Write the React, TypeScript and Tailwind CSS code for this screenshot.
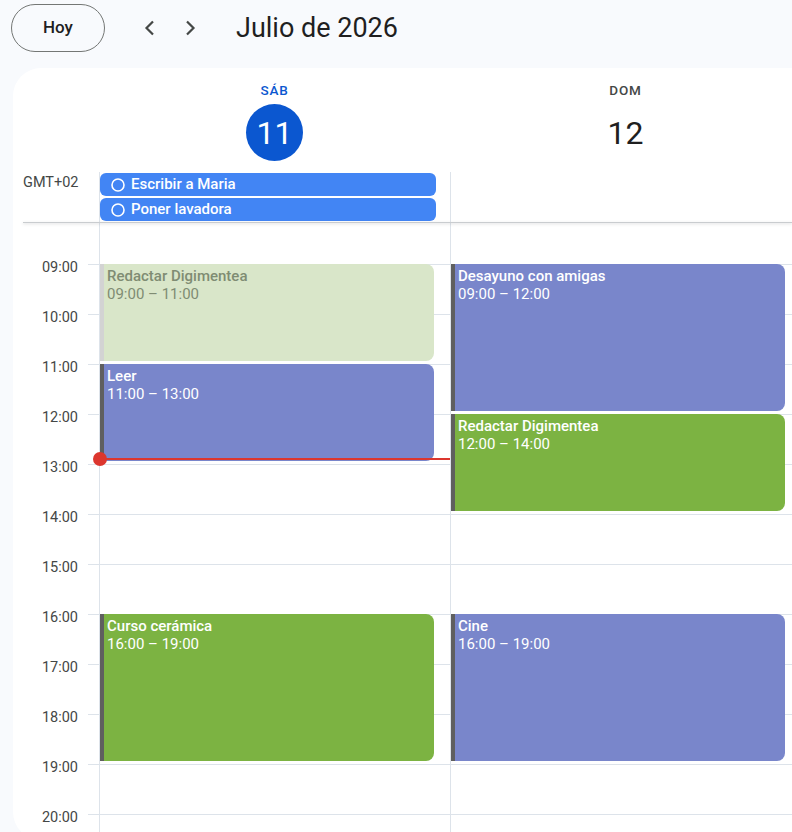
import React from "react";

type Ev = { title: string; time: string; start: number; end: number; color: string; faded?: boolean };

const col1: Ev[] = [
  { title: "Redactar Digimentea", time: "09:00 – 11:00", start: 9, end: 11, color: "bg-[#d9e6c9]", faded: true },
  { title: "Leer", time: "11:00 – 13:00", start: 11, end: 13, color: "bg-[#7986cb]" },
  { title: "Curso cerámica", time: "16:00 – 19:00", start: 16, end: 19, color: "bg-[#7cb342]" },
];
const col2: Ev[] = [
  { title: "Desayuno con amigas", time: "09:00 – 12:00", start: 9, end: 12, color: "bg-[#7986cb]" },
  { title: "Redactar Digimentea", time: "12:00 – 14:00", start: 12, end: 14, color: "bg-[#7cb342]" },
  { title: "Cine", time: "16:00 – 19:00", start: 16, end: 19, color: "bg-[#7986cb]" },
];

const hours = [9, 10, 11, 12, 13, 14, 15, 16, 17, 18, 19, 20];
const HOUR = 50;
const TOP = 41;

function EventBox({ ev }: { ev: Ev }) {
  return (
    <div
      className={`absolute left-0 w-[334px] rounded-r-[8px] border-l-[4px] pl-[3px] pt-[3px] leading-[18px] text-[15px] ${ev.color} ${
        ev.faded ? "border-[#d3d3d3] text-[#7f8c73]" : "border-[#5f5f5f] text-white"
      }`}
      style={{ top: TOP + (ev.start - 9) * HOUR, height: (ev.end - ev.start) * HOUR - 3 }}
    >
      <div className="font-medium">{ev.title}</div>
      <div>{ev.time}</div>
    </div>
  );
}

function Column({ events, now, w }: { events: Ev[]; now?: boolean; w: string }) {
  return (
    <div className={`relative ${w} shrink-0 border-l border-[#dde3ea]`}>
      <div className="h-[41px]" />
      {hours.map((h) => (
        <div key={h} className="h-[50px] border-t border-[#dde3ea]" />
      ))}
      {events.map((e, i) => (
        <EventBox key={i} ev={e} />
      ))}
      {now && (
        <div className="absolute left-[-1px] right-0 top-[235px] z-10 h-[2px] bg-[#dc362e]">
          <div className="absolute left-[-6px] top-[-6px] h-[14px] w-[14px] rounded-full bg-[#dc362e]" />
        </div>
      )}
    </div>
  );
}

function Chip({ text }: { text: string }) {
  return (
    <div className="flex h-[23px] w-[336px] items-center gap-[6px] rounded-[6px] bg-[#4285f4] pl-[11px] text-[15px] font-medium text-white">
      <svg width="14" height="14" viewBox="0 0 14 14">
        <circle cx="7" cy="7" r="6" fill="none" stroke="white" strokeWidth="1.6" />
      </svg>
      <span>{text}</span>
    </div>
  );
}

export default function App() {
  return (
    <div
      className="flex h-[832px] w-[792px] flex-col overflow-hidden bg-[#f8fafd] text-[#1f1f1f]"
      style={{ fontFamily: "Roboto, 'Noto Sans', sans-serif" }}
    >
      {/* top bar */}
      <div className="flex h-[56px] shrink-0 items-center">
        <button className="ml-[11px] flex h-[48px] w-[94px] items-center justify-center rounded-full border border-[#747775] text-[17px] font-medium text-[#1f1f1f]">
          Hoy
        </button>
        <div className="ml-[25px] flex">
          <button className="flex h-[40px] w-[40px] items-center justify-center text-[#444746]">
            <svg width="24" height="24" viewBox="0 0 24 24">
              <path d="M15 5.5 8.5 12l6.5 6.5" fill="none" stroke="currentColor" strokeWidth="2.2" />
            </svg>
          </button>
          <button className="flex h-[40px] w-[40px] items-center justify-center text-[#444746]">
            <svg width="24" height="24" viewBox="0 0 24 24">
              <path d="M9 5.5 15.5 12 9 18.5" fill="none" stroke="currentColor" strokeWidth="2.2" />
            </svg>
          </button>
        </div>
        <div className="ml-[26px] text-[27px] leading-none text-[#1f1f1f]">Julio de 2026</div>
      </div>

      {/* panel */}
      <div className="ml-[13px] mt-[12px] h-[772px] shrink-0 overflow-hidden rounded-l-[28px] bg-white">
        {/* day headers */}
        <div className="flex h-[104px]">
          <div className="w-[86px] shrink-0" />
          <div className="flex w-[351px] shrink-0 flex-col items-center pt-[14px]">
            <div className="text-[13.5px] font-medium leading-[16px] tracking-[0.8px] text-[#0b57d0]">SÁB</div>
            <div className="mt-[6px] flex h-[57px] w-[57px] items-center justify-center rounded-full bg-[#0b57d0] text-[32px] text-white">
              11
            </div>
          </div>
          <div className="flex w-[351px] shrink-0 flex-col items-center pt-[14px]">
            <div className="text-[13.5px] font-medium leading-[16px] tracking-[0.8px] text-[#444746]">DOM</div>
            <div className="mt-[6px] flex h-[57px] w-[57px] items-center justify-center text-[32px] text-[#1f1f1f]">
              12
            </div>
          </div>
        </div>

        {/* all-day */}
        <div className="flex h-[50px]">
          <div className="w-[86px] shrink-0 pl-[10px] pt-[3px] text-[14.5px] leading-[16px] text-[#444746]">GMT+02</div>
          <div className="flex w-[351px] shrink-0 flex-col gap-[2px] border-l border-[#dde3ea] pt-[1px]">
            <Chip text="Escribir a Maria" />
            <Chip text="Poner lavadora" />
          </div>
          <div className="w-[351px] shrink-0 border-l border-[#dde3ea]" />
        </div>
        <div className="relative z-20 ml-[10px] h-[1px] bg-[#c9cccf] shadow-[0_1px_3px_rgba(60,64,67,0.25)]" />

        {/* grid */}
        <div className="flex">
          <div className="w-[86px] shrink-0">
            <div className="h-[41px]" />
            {hours.map((h) => (
              <div key={h} className="relative h-[50px]">
                <div className="ml-[75px] border-t border-[#dde3ea]" />
                <span className="absolute right-[21px] top-[-5px] text-[14.5px] leading-[18px] text-[#444746]">
                  {String(h).padStart(2, "0")}:00
                </span>
              </div>
            ))}
          </div>
          <Column events={col1} now w="w-[351px]" />
          <Column events={col2} w="w-[351px]" />
        </div>
      </div>
    </div>
  );
}
